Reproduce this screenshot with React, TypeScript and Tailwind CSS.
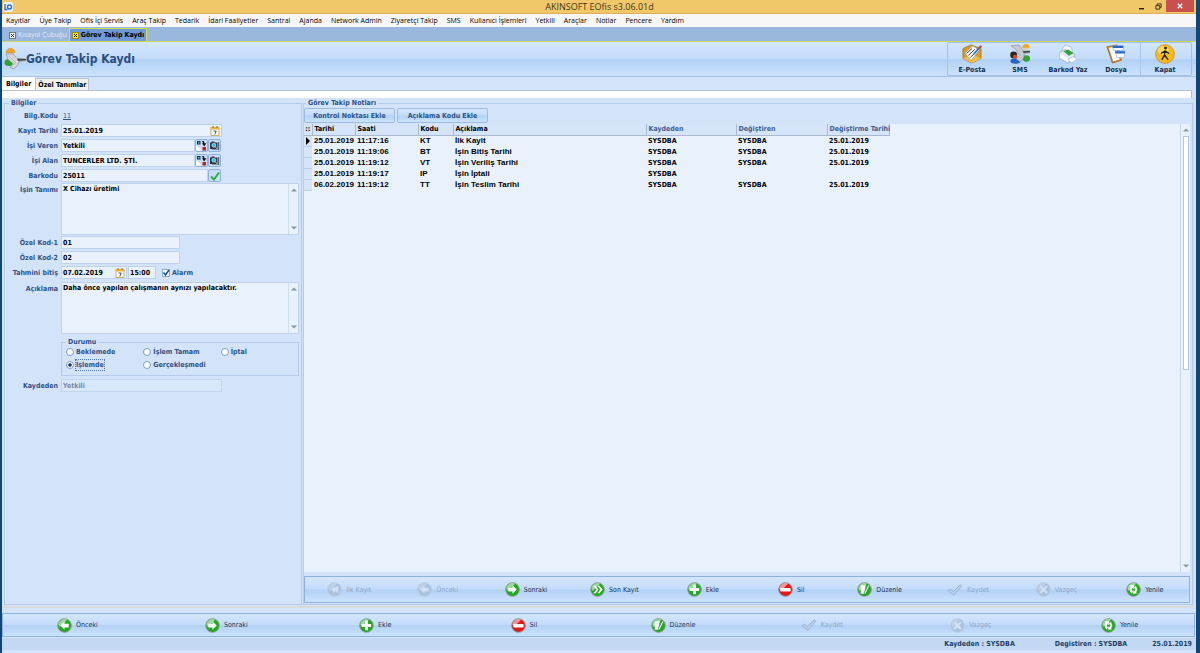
import { useState } from "react";
import type { ReactNode } from "react";

const menuItems = [
  "Kayıtlar", "Üye Takip", "Ofis İçi Servis", "Araç Takip", "Tedarik", "İdari Faaliyetler", "Santral", "Ajanda",
  "Network Admin", "Ziyaretçi Takip", "SMS", "Kullanıcı İşlemleri", "Yetkili", "Araçlar", "Notlar", "Pencere", "Yardım",
];

const notes = [
  { date: "25.01.2019", time: "11:17:16", code: "KT", text: "İlk Kayit", by: "SYSDBA", changedBy: "SYSDBA", changed: "25.01.2019" },
  { date: "25.01.2019", time: "11:19:06", code: "BT", text: "İşin Bitiş Tarihi", by: "SYSDBA", changedBy: "SYSDBA", changed: "25.01.2019" },
  { date: "25.01.2019", time: "11:19:12", code: "VT", text: "İşin Veriliş Tarihi", by: "SYSDBA", changedBy: "SYSDBA", changed: "25.01.2019" },
  { date: "25.01.2019", time: "11:19:17", code: "IP", text: "İşin İptali", by: "SYSDBA", changedBy: "", changed: "" },
  { date: "06.02.2019", time: "11:19:12", code: "TT", text: "İşin Teslim Tarihi", by: "SYSDBA", changedBy: "SYSDBA", changed: "25.01.2019" },
];

type NavItem = { label: string; icon: string; disabled?: boolean };

const innerNav: NavItem[] = [
  { label: "İlk Kayıt", icon: "first", disabled: true },
  { label: "Önceki", icon: "prev", disabled: true },
  { label: "Sonraki", icon: "next" },
  { label: "Son Kayıt", icon: "last" },
  { label: "Ekle", icon: "add" },
  { label: "Sil", icon: "del" },
  { label: "Düzenle", icon: "edit" },
  { label: "Kaydet", icon: "save", disabled: true },
  { label: "Vazgeç", icon: "cancel", disabled: true },
  { label: "Yenile", icon: "refresh" },
];

const outerNav: NavItem[] = [
  { label: "Önceki", icon: "prev" },
  { label: "Sonraki", icon: "next" },
  { label: "Ekle", icon: "add" },
  { label: "Sil", icon: "del" },
  { label: "Düzenle", icon: "edit" },
  { label: "Kaydet", icon: "save", disabled: true },
  { label: "Vazgeç", icon: "cancel", disabled: true },
  { label: "Yenile", icon: "refresh" },
];

const bar = "bg-[linear-gradient(#d3e6fd,#c4dcfb_48%,#b2d1f5_52%,#cbe3fd)]";
const field = "h-[13px] min-w-0 border border-[#bfd2ec] bg-[#e9f1fc] px-px text-[7px] font-bold text-black outline-none";

/* ---------- icons ---------- */

function NavIcon({ name, disabled }: { name: string; disabled?: boolean }) {
  const fill = disabled ? "#a9c1dd" : name === "del" ? "#e01818" : "#22a822";
  const glyph: Record<string, ReactNode> = {
    first: <path d="M8 4 4.500 8 8 12V9.500l4 2.500V4L8 6.500z" />,
    prev: <path d="M8 3.500 3.500 8 8 12.500V10h4.500V6H8z" />,
    next: <path d="M8 3.500 12.500 8 8 12.500V10H3.500V6H8z" />,
    last: <path d="M3.500 4 7 8l-3.500 4H6l3-4-3-4zM8 4l3 4-3 4h2l3.500-4L10 4z" />,
    add: <path d="M6.500 3h3v3.500H13v3H9.500V13h-3V9.500H3v-3h3.500z" />,
    del: <rect x="2.500" y="6.500" width="11" height="3.500" rx="1" />,
    edit: (
      <>
        <path d="M4 3.500h5.500l-2 9H4z" />
        <path d="m12 3 1.500 1-4 8-2 1.500.5-2.500z" stroke="#1b7d1b" strokeWidth=".6" />
      </>
    ),
    cancel: <path d="m5 3.500 3 2.500 3-2.500L12.500 5 10 8l2.500 3-1.500 1.500L8 10l-3 2.500L3.500 11 6 8 3.500 5z" />,
    refresh: (
      <>
        <path d="M6.500 12.500A5 5 0 0 1 5 5L3.800 3.800 8.500 3v4.500L6.800 6.500a3 3 0 0 0 .7 3.500z" />
        <path d="M9.500 3.500A5 5 0 0 1 11 11l1.200 1.200-4.700.8V8.500l1.700 1A3 3 0 0 0 8.500 6z" stroke="#22a822" strokeWidth=".5" />
      </>
    ),
  };
  if (name === "save") {
    return (
      <svg viewBox="0 0 18 14" className="h-3 w-4 shrink-0" fill="#b9cde6" stroke="#97b0d0" strokeWidth="1">
        <path d="m1 8 2.500-2L7 9l8-8 2 1.500L7.500 13z" />
      </svg>
    );
  }
  return (
    <svg viewBox="0 0 16 16" className="size-[15px] shrink-0">
      <circle cx="8" cy="8" r="7.300" fill={fill} stroke={disabled ? "#b7cbe3" : "#8f9b95"} strokeWidth="1" />
      <path d="M1.300 7a6.800 6.800 0 0 1 9.500-5.200L3 9.500z" fill="#fff" opacity={disabled ? 0.25 : 0.55} />
      <g fill={disabled ? "#cfe0f4" : "#fff"}>{glyph[name]}</g>
    </svg>
  );
}

function WorkerIcon() {
  return (
    <svg viewBox="0 0 22 22" className="size-[22px] shrink-0">
      <ellipse cx="5" cy="14.500" rx="4.500" ry="3.500" fill="#2da32d" />
      <circle cx="6.500" cy="5" r="3.500" fill="#e7c7a0" />
      <path d="M2 4.500a4.500 4 0 0 1 9 0z" fill="#f2a51c" stroke="#c47d0c" strokeWidth=".5" />
      <path d="m2 6 7 0 4 4.500 8 .3v1.700l-6 1-1 3-4 4.500-4-1.500 3-4-5-4z" fill="#d5d7d9" stroke="#8b9198" strokeWidth=".7" />
      <path d="m5 8 6 6M8 18l4-4" stroke="#aab0b6" strokeWidth=".8" />
      <path d="m13 10.800 9 .2v1.300l-8 .7z" fill="#3d4750" />
    </svg>
  );
}

function MailIcon() {
  return (
    <svg viewBox="0 0 22 22" className="size-5">
      <path d="m1 5 9-4 11 4v11l-10 5-10-5z" fill="#d99a2b" stroke="#9a6511" strokeWidth=".7" />
      <path d="m1 16 10-5 10 5-10 5z" fill="#efbd55" />
      <path d="m3 10 9-8 7 5-9 11z" fill="#fff" stroke="#7a8794" strokeWidth=".6" />
      <path d="m5 10.500 6-5.500M7 12.500l7-6.500M9 15l7-7" stroke="#33404f" strokeWidth="1.100" />
      <path d="m13 11 7-8" stroke="#2f6fc4" strokeWidth="2" />
      <path d="m19.500 4 2-2" stroke="#d93a2b" strokeWidth="2" />
    </svg>
  );
}

function SmsIcon() {
  return (
    <svg viewBox="0 0 22 22" className="size-5">
      <circle cx="4" cy="12" r="3.800" fill="#2b2320" />
      <ellipse cx="6" cy="18.800" rx="5.500" ry="3" fill="#2863c6" />
      <ellipse cx="18" cy="16" rx="4" ry="3.500" fill="#30a530" />
      <circle cx="17.500" cy="4.500" r="3" fill="#e9c9a0" />
      <path d="M13.500 4a4 4 0 0 1 8 0z" fill="#f1a722" />
      <circle cx="5.500" cy="14" r="2.200" fill="#d94b2a" />
      <path d="m1 2 9-1 5 7h7v1.500l-6 1-1 5-4 4-4-3 3-4-3-6z" fill="#c5c9cd" stroke="#7e868e" strokeWidth=".6" />
      <path d="m14 8 8-.5V9l-7 1z" fill="#3b444d" />
    </svg>
  );
}

function PrinterIcon() {
  return (
    <svg viewBox="0 0 22 22" className="size-5">
      <path d="m4 8 2-5 3-2 6 3 1 6z" fill="#eef5fd" stroke="#96a9bf" strokeWidth=".6" />
      <path d="m2 9 6-3 10 5v6l-7 4-9-5z" fill="#dfe8f2" stroke="#8d9fb3" strokeWidth=".7" />
      <path d="m6 8 5-2 6 4-5 3z" fill="#29a63a" />
      <path d="m2 10 9 5v5l-9-5z" fill="#f7fafd" />
      <path d="m11 17 6-3 4 3-6 4z" fill="#fff" stroke="#93a4b8" strokeWidth=".6" />
    </svg>
  );
}

function FileIcon() {
  return (
    <svg viewBox="0 0 22 22" className="size-5">
      <path d="m1 3 11-2 5 17-10 3z" fill="#cf8a2e" stroke="#88530f" strokeWidth=".7" />
      <path d="m3 4 8-1 4 14-7 2z" fill="#fff" />
      <path d="M7 2h12v5H8zM10 8h11l-1 7H12z" fill="#fff" stroke="#7d9cc8" strokeWidth=".6" />
      <path d="M7 2h12v2.500H7.500zM10 8h11l-.3 2.500H10.500z" fill="#2a65c8" />
    </svg>
  );
}

function ExitIcon() {
  return (
    <svg viewBox="0 0 22 22" className="size-5">
      <circle cx="11" cy="11" r="10.300" fill="#f8b91e" stroke="#c98a12" strokeWidth=".8" />
      <ellipse cx="9" cy="7" rx="6" ry="4.500" fill="#ffe27a" opacity=".8" />
      <circle cx="11.500" cy="4.500" r="1.600" fill="#2b2411" />
      <path d="m11 7-.5 5-3 5.500M10.500 12l4 5.500M11 7.500l-4.500 3M11 7.500l4.500 3" fill="none" stroke="#2b2411" strokeWidth="1.500" />
    </svg>
  );
}

function CalendarIcon() {
  return (
    <svg viewBox="0 0 10 10" className="size-[10px]">
      <rect x="1" y="1.500" width="8" height="8" fill="#fffdf2" stroke="#b98a45" strokeWidth=".7" />
      <rect x="1" y="1" width="8" height="2.500" fill="#f0b33a" />
      <path d="M3 0v2M7 0v2" stroke="#7c5a28" strokeWidth=".9" />
      <path d="M3.500 5h2.700L4.800 8.500" fill="none" stroke="#3f4855" strokeWidth=".9" />
    </svg>
  );
}

function LinkIcon() {
  return (
    <svg viewBox="0 0 11 11" className="size-[11px]">
      <path d="M0 10.500V5l5.500 5.500z" fill="#fff" />
      <rect x="1" y="1" width="3.500" height="3.500" fill="#1f2f55" />
      <rect x="2" y="2" width="1.500" height="1.500" fill="#55b7e6" />
      <path d="M6 1.500h2V4M6.500 3.500h3.400L8.200 6z" fill="#111" stroke="#111" strokeWidth=".6" />
      <rect x="6.500" y="7" width="3.500" height="3.500" fill="#c02020" />
    </svg>
  );
}

function LookupIcon() {
  return (
    <svg viewBox="0 0 11 11" className="size-[11px]">
      <path d="M1 2.500h1.500v-1h3v1h3V9H1z" fill="#2b3240" />
      <path d="M9.200 2h1v8H3V9.500h6.200z" fill="#394558" />
      <circle cx="4.800" cy="5.200" r="2" fill="#35c0ea" stroke="#dff4ff" strokeWidth=".6" />
      <path d="m6.500 7 1.500 1.800" stroke="#fff" strokeWidth=".8" />
    </svg>
  );
}

/* ---------- small parts ---------- */

function Row({ label, id, children }: { label: string; id?: string; children?: ReactNode }) {
  return (
    <div className="flex h-[15px] items-center">
      <label htmlFor={id} className="w-[54px] shrink-0 pr-[3px] text-right">{label}</label>
      {children}
    </div>
  );
}

function Memo({ label, id, value }: { label: string; id: string; value: string }) {
  return (
    <div className="flex">
      <label htmlFor={id} className="w-[54px] shrink-0 pt-[2px] pr-[3px] text-right">{label}</label>
      <div className="flex h-[52px] min-w-0 flex-1 border border-[#bfd2ec] bg-[#e9f1fc]">
        <textarea id={id} defaultValue={value} className="min-w-0 flex-1 resize-none overflow-hidden px-px text-[7px] leading-[10px] font-bold text-black outline-none" />
        <ScrollBar />
      </div>
    </div>
  );
}

function Arrow({ down }: { down?: boolean }) {
  return (
    <svg viewBox="0 0 6 4" className="h-1 w-[6px]" fill="#8795a8">
      <path d={down ? "M0 .5h6L3 3.500z" : "M0 3.500h6L3 .5z"} />
    </svg>
  );
}

function ScrollBar() {
  return (
    <div aria-hidden className="flex w-[10px] flex-col items-center justify-between border-l border-[#d0def1] py-1">
      <Arrow />
      <Arrow down />
    </div>
  );
}

function IconButton({ label, children }: { label: string; children: ReactNode }) {
  return (
    <button aria-label={label} className="flex h-[13px] w-[13px] shrink-0 items-center justify-center rounded-xs border border-[#8fb0dc] bg-[#c9def8]">
      {children}
    </button>
  );
}

function NavBar({ items, className }: { items: NavItem[]; className: string }) {
  return (
    <div className={`flex border border-[#8fb1de] font-normal ${bar} ${className}`}>
      {items.map((it) => (
        <button key={it.label} disabled={it.disabled} className={`flex flex-1 items-center justify-center gap-1 text-[7px] ${it.disabled ? "text-[#8fa9c9]" : "text-[#1c3354]"}`}>
          <NavIcon name={it.icon} disabled={it.disabled} />
          {it.label}
        </button>
      ))}
    </div>
  );
}

function Tool({ label, children }: { label: string; children: ReactNode }) {
  return (
    <button className="flex w-12 flex-col items-center gap-[2px] pt-px text-[7px] leading-[9px] font-bold whitespace-nowrap text-[#14304f]">
      {children}
      {label}
    </button>
  );
}

/* ---------- left form ---------- */

function TaskForm() {
  const [status, setStatus] = useState("İşlemde");
  const radio = (name: string) => (
    <label className="flex items-center gap-[2px]">
      <input
        type="radio"
        name="durum"
        checked={status === name}
        onChange={() => setStatus(name)}
        className="size-2 appearance-none rounded-full border border-[#7d9cc6] bg-white checked:bg-[radial-gradient(circle,#1b3f78_35%,#fff_45%)]"
      />
      <span className={status === name ? "outline-1 outline-dotted outline-[#5577a8]" : ""}>{name}</span>
    </label>
  );

  return (
    <fieldset className="w-[298px] shrink-0 border border-[#b5cbe9] px-[2px]">
      <legend className="ml-[2px] h-[10px] px-[2px] leading-[10px]">Bilgiler</legend>
      <Row label="Bilg.Kodu"><a href="#" className="pl-[2px] font-normal underline">11</a></Row>
      <Row label="Kayıt Tarihi" id="kayit">
        <div className="flex w-[161px] items-center border border-[#bfd2ec] bg-[#e9f1fc]">
          <input id="kayit" defaultValue="25.01.2019" className="h-[11px] min-w-0 flex-1 px-px text-[7px] font-bold text-black outline-none" />
          <button aria-label="Takvim" className="px-px"><CalendarIcon /></button>
        </div>
      </Row>
      <Row label="İşi Veren" id="veren">
        <input id="veren" defaultValue="Yetkili" className={`${field} w-[134px]`} />
        <IconButton label="Bağla"><LinkIcon /></IconButton>
        <IconButton label="Ara"><LookupIcon /></IconButton>
      </Row>
      <Row label="İşi Alan" id="alan">
        <input id="alan" defaultValue="TUNCERLER LTD. ŞTİ." className={`${field} w-[134px]`} />
        <IconButton label="Bağla"><LinkIcon /></IconButton>
        <IconButton label="Ara"><LookupIcon /></IconButton>
      </Row>
      <Row label="Barkodu" id="barkod">
        <input id="barkod" defaultValue="25011" className={`${field} w-[147px]`} />
        <IconButton label="Onayla">
          <svg viewBox="0 0 10 10" className="size-[10px]"><path d="m1 5.500 3 3L9 1.500" fill="none" stroke="#2fae3c" strokeWidth="2" /></svg>
        </IconButton>
      </Row>
      <Memo label="İşin Tanımı" id="tanim" value="X Cihazı üretimi" />
      <Row label="Özel Kod-1" id="kod1"><input id="kod1" defaultValue="01" className={`${field} w-[119px]`} /></Row>
      <Row label="Özel Kod-2" id="kod2"><input id="kod2" defaultValue="02" className={`${field} w-[119px]`} /></Row>
      <Row label="Tahmini bitiş" id="bitis">
        <div className="flex w-[66px] items-center border border-[#bfd2ec] bg-[#e9f1fc]">
          <input id="bitis" defaultValue="07.02.2019" className="h-[11px] min-w-0 flex-1 px-px text-[7px] font-bold text-black outline-none" />
          <button aria-label="Takvim" className="px-px"><CalendarIcon /></button>
        </div>
        <input aria-label="Saat" defaultValue="15:00" className={`${field} ml-px w-7`} />
        <label className="ml-[6px] flex items-center gap-[2px]">
          <span className="relative flex">
            <input type="checkbox" defaultChecked className="peer size-2 appearance-none border border-[#8eabd2] bg-white" />
            <svg viewBox="0 0 8 8" className="pointer-events-none absolute inset-0 hidden peer-checked:block"><path d="m1.500 3.500 2 2.500L7 1" fill="none" stroke="#1c4b94" strokeWidth="1.500" /></svg>
          </span>
          Alarm
        </label>
      </Row>
      <div className="mt-[2px]">
        <Memo label="Açıklama" id="aciklama" value="Daha önce yapılan çalışmanın aynızı yapılacaktır." />
      </div>
      <fieldset className="mt-[3px] ml-[54px] h-[39px] border border-[#b5cbe9] pl-1">
        <legend className="h-[10px] px-[2px] leading-[10px]">Durumu</legend>
        <div className="grid grid-cols-3 gap-y-[3px] leading-[10px]">
          {radio("Beklemede")}
          {radio("İşlem Tamam")}
          {radio("İptal")}
          {radio("İşlemde")}
          {radio("Gerçekleşmedi")}
        </div>
      </fieldset>
      <div className="mt-[2px]">
        <Row label="Kaydeden" id="kaydeden">
          <input id="kaydeden" disabled defaultValue="Yetkili" className="h-[13px] w-[161px] border border-[#c3d5ee] bg-[#d9e7fa] px-px text-[7px] text-[#7688a3]" />
        </Row>
      </div>
    </fieldset>
  );
}

/* ---------- right side notes ---------- */

function Notes() {
  const th = "border-r border-b border-[#a9b9cf] pl-[2px] text-left font-bold whitespace-nowrap";
  const action = `h-[15px] w-[91px] rounded-xs border border-[#9dbbe3] font-bold ${bar}`;
  return (
    <fieldset className="flex min-w-0 flex-1 flex-col border border-[#b5cbe9] pr-[2px]">
      <legend className="ml-[2px] h-[10px] px-[2px] leading-[10px]">Görev Takip Notları</legend>
      <div className="flex gap-[2px]">
        <button className={action}>Kontrol Noktası Ekle</button>
        <button className={action}>Açıklama Kodu Ekle</button>
      </div>
      <div className="mt-px flex flex-1 bg-[#e9f1fc]">
        <div className="min-w-0 flex-1 overflow-hidden">
          <table className="w-[585px] table-fixed border-collapse leading-[10px] text-black">
            <thead className="bg-[#d5e4f9]">
              <tr className="h-[11px]">
                <th className="w-[8px] border-r border-b border-[#a9b9cf] text-center">::</th>
                <th className={`${th} w-[43px]`}>Tarihi</th>
                <th className={`${th} w-[63px]`}>Saati</th>
                <th className={`${th} w-[35px]`}>Kodu</th>
                <th className={`${th} w-[193px]`}>Açıklama</th>
                <th className={`${th} w-[90px] text-[#3d5f92]`}>Kaydeden</th>
                <th className={`${th} w-[91px] text-[#3d5f92]`}>Değiştiren</th>
                <th className={`${th} w-[62px] text-[#3d5f92]`}>Değiştirme Tarihi</th>
              </tr>
            </thead>
            <tbody>
              {notes.map((n, i) => (
                <tr key={n.text} className="h-[11px] font-bold [&>td]:pl-[2px] [&>td]:whitespace-nowrap">
                  <td className="border-b border-[#b9cce8] bg-[#d5e4f9]">
                    {i === 0 && <svg viewBox="0 0 4 8" className="h-2 w-1"><path d="M0 0v8l4-4z" /></svg>}
                  </td>
                  <td className="font-['Liberation_Sans',sans-serif] text-[8px]">{n.date}</td>
                  <td className="font-['Liberation_Sans',sans-serif] text-[8px]">{n.time}</td>
                  <td className="font-['Liberation_Sans',sans-serif] text-[8px]">{n.code}</td>
                  <td className="font-['Liberation_Sans',sans-serif] text-[8px]">{n.text}</td>
                  <td>{n.by}</td>
                  <td>{n.changedBy}</td>
                  <td>{n.changed}</td>
                </tr>
              ))}
            </tbody>
          </table>
        </div>
        <div aria-hidden className="flex w-[10px] flex-col items-center gap-1 border-l border-[#c5d7ef] pt-1 pb-1">
          <Arrow />
          <div className="w-[6px] flex-[5] border border-[#b4c9e8] bg-white" />
          <div className="flex-[4]" />
          <Arrow down />
        </div>
      </div>
      <NavBar items={innerNav} className="mt-1 mb-px h-[27px]" />
    </fieldset>
  );
}

export default function App() {
  return (
    <div className="flex min-h-screen flex-col bg-[#d3e3fa] border-r-4 border-l-2 border-[#0d4678] font-['DejaVu_Sans_Condensed','DejaVu_Sans',sans-serif] text-[7px] leading-[10px] text-[#2f5288]">
      <header className="flex h-[14px] items-center border-b border-[#dfae55] bg-[#f0c869] font-['Open_Sans',sans-serif]">
        <svg viewBox="0 0 10 10" className="ml-px size-[10px]">
          <rect width="10" height="10" rx="2" fill="#e6f0ff" />
          <path d="M2 2v5.500h2.500" fill="none" stroke="#2c68cf" strokeWidth="1.300" />
          <circle cx="6.500" cy="5" r="2" fill="none" stroke="#2c68cf" strokeWidth="1.300" />
        </svg>
        <h1 className="flex-1 pl-[52px] text-center text-[9px] text-[#44371b]">AKINSOFT EOfis s3.06.01d</h1>
        <div className="mr-[2px] flex h-full">
          <button aria-label="Küçült" className="flex w-4 items-center justify-center">
            <svg viewBox="0 0 6 6" className="size-[6px]"><path d="M0 4h5v1.500H0z" fill="#2c2413" /></svg>
          </button>
          <button aria-label="Geri Yükle" className="flex w-4 items-center justify-center">
            <svg viewBox="0 0 8 8" className="size-[7px]" fill="none" stroke="#2c2413"><path d="M1 3h4.500v4H1zM2.500 3V1H7v4H5.500" /></svg>
          </button>
          <button aria-label="Kapat" className="flex h-3 w-7 items-center justify-center bg-[#c8504e]">
            <svg viewBox="0 0 6 6" className="size-[6px]"><path d="m.8.8 4.400 4.400m0-4.400L.8 5.200" stroke="#fff" strokeWidth="1.300" /></svg>
          </button>
        </div>
      </header>

      <nav className="flex h-[13px] items-center gap-[9px] bg-[#f7f7f8] pl-1 font-['Open_Sans',sans-serif] text-[7px] text-black">
        {menuItems.map((m) => <button key={m} className="whitespace-nowrap">{m}</button>)}
      </nav>

      <div className="flex h-[15px] items-end border-b border-[#cdda55] bg-[#9ab7de]">
        <button className="flex h-3 items-center gap-[2px] pr-[2px] pl-[7px] text-[#dfe9f7]">
          <svg viewBox="0 0 7 7" className="size-[7px]"><rect x=".5" y=".5" width="6" height="6" fill="#eee" stroke="#777" /><path d="m2 2 3 3m0-3L2 5" stroke="#333" /></svg>
          Kısayol Çubuğu
        </button>
        <button className="flex h-[13px] items-center gap-[2px] border border-b-0 border-[#d3de4c] bg-[#6f9ad7] px-[2px] font-bold text-black">
          <svg viewBox="0 0 7 7" className="size-[7px]"><rect x=".5" y=".5" width="6" height="6" fill="#ffe83a" stroke="#a58a00" /><path d="m2 2 3 3m0-3L2 5" stroke="#111" /></svg>
          Görev Takip Kaydı
        </button>
      </div>

      <div className={`flex h-[35px] items-center border-b border-[#a9c2e4] ${bar}`}>
        <div className="pl-[2px]"><WorkerIcon /></div>
        <h2 className="flex-1 text-[12px] font-bold text-[#2a4f7c]">Görev Takip Kaydı</h2>
        <div className="mr-1 flex h-full rounded-xs border border-[#a3c0e6] pr-[2px]">
          <Tool label="E-Posta"><MailIcon /></Tool>
          <Tool label="SMS"><SmsIcon /></Tool>
          <Tool label="Barkod Yaz"><PrinterIcon /></Tool>
          <Tool label="Dosya"><FileIcon /></Tool>
          <div className="w-px bg-[#a9c4e8]" />
          <Tool label="Kapat"><ExitIcon /></Tool>
        </div>
      </div>

      <div className="flex h-[13px] items-end font-bold text-black">
        <button className="h-[13px] bg-white px-1">Bilgiler</button>
        <button className="h-3 border border-b-0 border-[#b9c3cf] bg-[#f1f1ee] px-[2px]">Özel Tanımlar</button>
      </div>
      <div className="mr-1 h-2 border-t border-r border-[#b9c3cf] bg-white" />

      <main className="mr-[2px] flex flex-1 gap-px border-r border-b-2 border-[#d9dbde] pb-px pl-[2px] font-bold">
        <TaskForm />
        <Notes />
      </main>

      <NavBar items={outerNav} className="mt-[5px] mr-px h-6" />

      <footer className="mt-px mb-[3px] flex h-3 items-center justify-end gap-10 bg-[#c3d8f2] pr-1 font-bold text-[#1f3c66]">
        <span>Kaydeden : SYSDBA</span>
        <div className="flex gap-[25px]">
          <span>Degistiren : SYSDBA</span>
          <span>25.01.2019</span>
        </div>
      </footer>
    </div>
  );
}
